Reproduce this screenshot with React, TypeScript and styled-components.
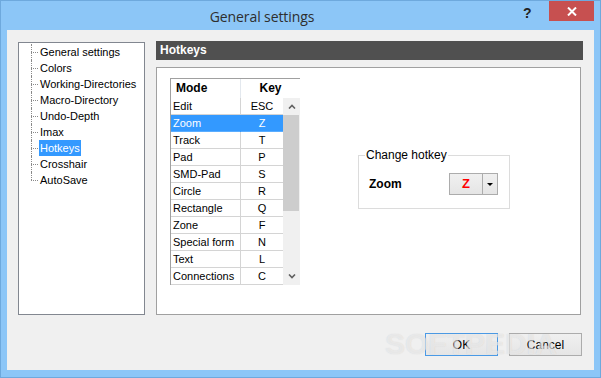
import React from "react";
import styled, { createGlobalStyle } from "styled-components";

const GlobalStyle = createGlobalStyle`
  html, body {
    margin: 0;
    padding: 0;
    background: #ffffff;
  }
  body {
    font-family: "Liberation Sans", Arial, sans-serif;
    font-size: 11px;
    color: #000;
  }
`;

const Frame = styled.div`
  position: relative;
  width: 601px;
  height: 378px;
  box-sizing: border-box;
  background: #8cc6f7;
  border: 1px solid #6ea9dd;
  display: flex;
  flex-direction: column;
  overflow: hidden;
`;

const TitleBar = styled.div`
  height: 29px;
  display: flex;
  align-items: flex-start;
`;

const Title = styled.div`
  flex: 1;
  text-align: center;
  padding-top: 6px;
  font-family: "Open Sans", "Noto Sans", sans-serif;
  font-size: 14px;
  color: #2e2e2e;
  letter-spacing: -0.1px;
`;

const HelpButton = styled.div`
  width: 14px;
  margin-top: 4px;
  margin-right: 12px;
  font-family: "Liberation Sans", Arial, sans-serif;
  font-weight: bold;
  font-size: 14px;
  color: #222;
`;

const CloseButton = styled.div`
  width: 45px;
  height: 20px;
  margin-right: 6px;
  background: #c75050;
  display: flex;
  align-items: center;
  justify-content: center;
`;

const Client = styled.div`
  height: 340px;
  margin: 0 6px 0 6px;
  background: #f0f0f0;
  display: flex;
  flex-direction: column;
`;

const Body = styled.div`
  display: flex;
  gap: 11px;
  padding: 11px 10px 0 11px;
`;

const Tree = styled.div`
  width: 127px;
  height: 273px;
  box-sizing: border-box;
  margin-top: 1px;
  background: #fff;
  border: 1px solid #828790;
  padding-top: 1px;
`;

const TreeItem = styled.div<{ $last?: boolean }>`
  position: relative;
  height: 16px;
  line-height: 16px;
  padding-left: 20px;
  white-space: nowrap;

  &::before {
    content: "";
    position: absolute;
    left: 12px;
    top: 8px;
    width: 7px;
    border-top: 1px dotted #8a8a8a;
  }
  &::after {
    content: "";
    position: absolute;
    left: 12px;
    top: 0;
    height: ${(p) => (p.$last ? "8px" : "16px")};
    border-left: 1px dotted #8a8a8a;
  }
`;

const TreeLabel = styled.span<{ $selected?: boolean }>`
  display: inline-block;
  padding: 0 1px;
  background: ${(p) => (p.$selected ? "#3399ff" : "transparent")};
  color: ${(p) => (p.$selected ? "#fff" : "#000")};
`;

const Side = styled.div`
  width: 427px;
  display: flex;
  flex-direction: column;
`;

const PageHeader = styled.div`
  height: 19px;
  background: #505050;
  color: #fff;
  font-weight: bold;
  font-size: 12px;
  line-height: 19px;
  padding-left: 4px;
`;

const PageBox = styled.div`
  width: 425px;
  height: 248px;
  margin-top: 7px;
  box-sizing: border-box;
  background: #fff;
  border: 1px solid #a0a0a0;
  display: flex;
  align-items: flex-start;
  padding: 10px 0 0 13px;
`;

const Table = styled.div`
  width: 130px;
  height: 207px;
  box-sizing: border-box;
  border-top: 1px solid #a0a0a0;
  border-left: 1px solid #a0a0a0;
  display: flex;
  flex-direction: column;
`;

const HeaderRow = styled.div`
  height: 19px;
  display: grid;
  grid-template-columns: 69px 1px 59px;
  font-weight: bold;
  font-size: 12px;
  line-height: 19px;
`;

const HeaderCell = styled.div<{ $center?: boolean }>`
  text-align: ${(p) => (p.$center ? "center" : "left")};
  padding-left: ${(p) => (p.$center ? "0" : "5px")};
`;

const HeaderDivider = styled.div`
  background: #e3e8ee;
`;

const TableBody = styled.div`
  display: flex;
  flex: 1;
`;

const Rows = styled.div`
  width: 112px;
`;

const Row = styled.div<{ $selected?: boolean }>`
  height: 17px;
  display: grid;
  grid-template-columns: 69px 1px 42px;
  background: ${(p) => (p.$selected ? "#3399ff" : "#fff")};
  color: ${(p) => (p.$selected ? "#fff" : "#000")};
`;

const Cell = styled.div<{ $center?: boolean; $selected?: boolean }>`
  box-sizing: border-box;
  height: 17px;
  line-height: 17px;
  padding-left: ${(p) => (p.$center ? "0" : "2px")};
  text-align: ${(p) => (p.$center ? "center" : "left")};
  border-bottom: 1px solid ${(p) => (p.$selected ? "#5aadff" : "#d4d4d4")};
  white-space: nowrap;
`;

const RowDivider = styled.div<{ $selected?: boolean }>`
  background: ${(p) => (p.$selected ? "#3399ff" : "#d4d4d4")};
`;

const ScrollBar = styled.div`
  width: 17px;
  background: #f0f0f0;
  display: flex;
  flex-direction: column;
`;

const ScrollArrow = styled.div`
  height: 17px;
  display: flex;
  align-items: center;
  justify-content: center;
`;

const ScrollThumb = styled.div`
  height: 96px;
  background: #cdcdcd;
  margin-right: 1px;
`;

const ScrollTrack = styled.div`
  flex: 1;
`;

const GroupBox = styled.fieldset`
  width: 152px;
  box-sizing: border-box;
  margin: 70px 0 0 58px;
  padding: 11px 11px 13px 10px;
  border: 1px solid #dcdcdc;
  display: flex;
  align-items: center;
  justify-content: space-between;
`;

const GroupLegend = styled.legend`
  padding: 0 1px;
  margin-left: -4px;
  font-size: 12px;
  line-height: 14px;
`;

const FieldLabel = styled.span`
  font-weight: bold;
  font-size: 12px;
`;

const Combo = styled.div`
  width: 49px;
  height: 22px;
  box-sizing: border-box;
  border: 1px solid #acacac;
  background: linear-gradient(#f0f0f0, #e5e5e5);
  display: flex;
`;

const ComboValue = styled.div`
  width: 32px;
  border-right: 1px solid #acacac;
  color: #ff0000;
  font-weight: bold;
  font-size: 13px;
  line-height: 20px;
  text-align: center;
`;

const ComboArrow = styled.div`
  flex: 1;
  display: flex;
  align-items: center;
  justify-content: center;

  &::after {
    content: "";
    border-left: 3px solid transparent;
    border-right: 3px solid transparent;
    border-top: 3px solid #000;
  }
`;

const Footer = styled.div`
  margin-top: auto;
  display: flex;
  justify-content: flex-end;
  gap: 11px;
  padding: 0 12px 14px 0;
`;

const Button = styled.button<{ $default?: boolean }>`
  width: 73px;
  height: 23px;
  box-sizing: border-box;
  border: 1px solid ${(p) => (p.$default ? "#4a9ae6" : "#acacac")};
  background: linear-gradient(#f0f0f0, #e5e5e5);
  font-family: "Liberation Sans", Arial, sans-serif;
  font-size: 12px;
  color: #000;
  padding: 0;
`;

const Watermark = styled.div`
  position: absolute;
  left: 384px;
  top: 326px;
  font-family: "Liberation Sans", Arial, sans-serif;
  font-weight: bold;
  font-size: 30px;
  color: rgba(255, 255, 255, 0.5);
  text-shadow: 0 0 1px rgba(150, 150, 150, 0.35);
  pointer-events: none;
`;

const Chevron = ({ up }: { up?: boolean }) => (
  <svg width="8" height="5" viewBox="0 0 8 5">
    <polyline
      points={up ? "1,4.5 4,1.5 7,4.5" : "1,0.5 4,3.5 7,0.5"}
      fill="none"
      stroke="#606060"
      strokeWidth="1.6"
    />
  </svg>
);

const treeItems = [
  "General settings",
  "Colors",
  "Working-Directories",
  "Macro-Directory",
  "Undo-Depth",
  "Imax",
  "Hotkeys",
  "Crosshair",
  "AutoSave",
];

const hotkeys: [string, string][] = [
  ["Edit", "ESC"],
  ["Zoom", "Z"],
  ["Track", "T"],
  ["Pad", "P"],
  ["SMD-Pad", "S"],
  ["Circle", "R"],
  ["Rectangle", "Q"],
  ["Zone", "F"],
  ["Special form", "N"],
  ["Text", "L"],
  ["Connections", "C"],
];

export default function App() {
  const selectedPage = "Hotkeys";
  const selectedMode = "Zoom";

  return (
    <>
      <GlobalStyle />
      <Frame>
        <TitleBar>
          <Title>General settings</Title>
          <HelpButton>?</HelpButton>
          <CloseButton>
            <svg width="10" height="9" viewBox="0 0 10 9">
              <path d="M1 0.5 L9 8.5 M9 0.5 L1 8.5" stroke="#fff" strokeWidth="2" />
            </svg>
          </CloseButton>
        </TitleBar>
        <Client>
          <Body>
            <Tree>
              {treeItems.map((item, i) => (
                <TreeItem key={item} $last={i === treeItems.length - 1}>
                  <TreeLabel $selected={item === selectedPage}>{item}</TreeLabel>
                </TreeItem>
              ))}
            </Tree>
            <Side>
              <PageHeader>Hotkeys</PageHeader>
              <PageBox>
                <Table>
                  <HeaderRow>
                    <HeaderCell>Mode</HeaderCell>
                    <HeaderDivider />
                    <HeaderCell $center>Key</HeaderCell>
                  </HeaderRow>
                  <TableBody>
                    <Rows>
                      {hotkeys.map(([mode, key]) => {
                        const sel = mode === selectedMode;
                        return (
                          <Row key={mode} $selected={sel}>
                            <Cell $selected={sel}>{mode}</Cell>
                            <RowDivider $selected={sel} />
                            <Cell $center $selected={sel}>
                              {key}
                            </Cell>
                          </Row>
                        );
                      })}
                    </Rows>
                    <ScrollBar>
                      <ScrollArrow>
                        <Chevron up />
                      </ScrollArrow>
                      <ScrollThumb />
                      <ScrollTrack />
                      <ScrollArrow>
                        <Chevron />
                      </ScrollArrow>
                    </ScrollBar>
                  </TableBody>
                </Table>
                <GroupBox>
                  <GroupLegend>Change hotkey</GroupLegend>
                  <FieldLabel>Zoom</FieldLabel>
                  <Combo>
                    <ComboValue>Z</ComboValue>
                    <ComboArrow />
                  </Combo>
                </GroupBox>
              </PageBox>
            </Side>
          </Body>
          <Footer>
            <Button $default>OK</Button>
            <Button>Cancel</Button>
          </Footer>
        </Client>
        <Watermark>SOFTPEDIA</Watermark>
      </Frame>
    </>
  );
}
